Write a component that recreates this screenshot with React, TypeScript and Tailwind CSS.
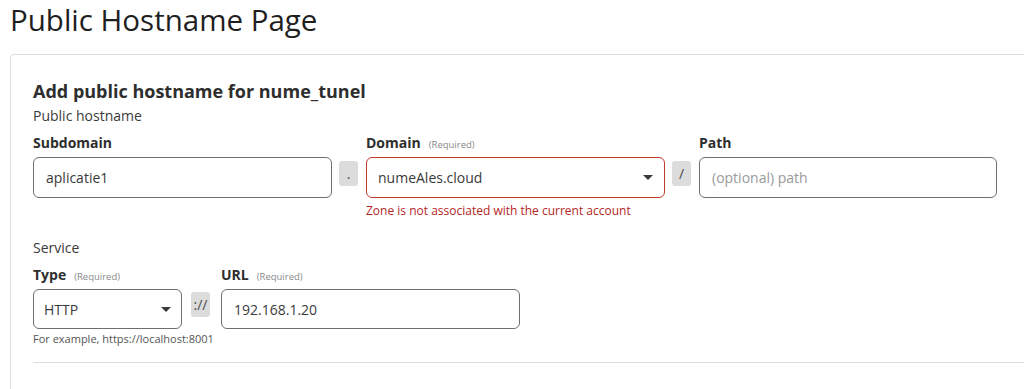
import React from "react";

function Caret() {
  return (
    <svg width="10" height="5" viewBox="0 0 10 5" className="block">
      <polygon points="0,0 10,0 5,5" fill="#3a3a3a" />
    </svg>
  );
}

function Sep({ children, className = "" }: { children: React.ReactNode; className?: string }) {
  return (
    <div
      className={`flex h-[25px] w-[19px] shrink-0 items-center justify-center rounded-[3px] bg-[#dcdcdc] text-[14px] leading-none text-[#4a4a4a] ${className}`}
    >
      {children}
    </div>
  );
}

function Label({ text, required }: { text: string; required?: boolean }) {
  return (
    <div className="h-[20px] text-[14px] leading-[20px]">
      <span className="font-bold text-[#2e2e2e]">{text}</span>
      {required && <span className="ml-[8px] text-[9.5px] leading-[0] text-[#8a8a8a]">(Required)</span>}
    </div>
  );
}

export default function App() {
  return (
    <div className="h-[389px] w-[1024px] overflow-hidden bg-white font-['Open_Sans',sans-serif] text-[#333]">
      <h1 className="pl-[10px] pt-[2px] text-[29.5px] font-normal leading-[36px] text-[#1f1f1f]">
        Public Hostname Page
      </h1>
      <div className="ml-[10px] mt-[16px] w-[1060px] rounded-[4px] border border-[#dedede] pl-[22px] pt-[24px] pb-[40px]">
        <h2 className="text-[18px] font-bold leading-[24px] text-[#2e2e2e]">
          Add public hostname for nume_tunel
        </h2>
        <div className="mt-[3px] text-[14px] leading-[20px] text-[#3a3a3a]">Public hostname</div>

        <div className="mt-[7px] flex items-start">
          <div className="w-[299px] shrink-0">
            <Label text="Subdomain" />
            <div className="mt-[4px] flex h-[41px] items-center rounded-[6px] border border-[#6f6f6f] pl-[12px] text-[14px] text-[#3a3a3a]">
              aplicatie1
            </div>
          </div>
          <Sep className="ml-[7px] mr-[8px] mt-[28px]">.</Sep>
          <div className="w-[299px] shrink-0">
            <Label text="Domain" required />
            <div className="mt-[4px] flex h-[41px] items-center justify-between rounded-[6px] border border-[#c0392b] pl-[11px] pr-[11px] text-[14px] text-[#3a3a3a]">
              <span>numeAles.cloud</span>
              <Caret />
            </div>
            <div className="mt-[5px] text-[12px] leading-[16px] text-[#b3261e]">
              Zone is not associated with the current account
            </div>
          </div>
          <Sep className="ml-[7px] mr-[8px] mt-[28px]">/</Sep>
          <div className="w-[298px] shrink-0">
            <Label text="Path" />
            <div className="mt-[4px] flex h-[41px] items-center rounded-[6px] border border-[#6f6f6f] pl-[12px] text-[14px] text-[#9a9a9a]">
              (optional) path
            </div>
          </div>
        </div>

        <div className="mt-[19px] text-[14px] leading-[20px] text-[#3a3a3a]">Service</div>
        <div className="mt-[7px] flex items-start">
          <div className="w-[149px] shrink-0">
            <Label text="Type" required />
            <div className="mt-[4px] flex h-[40px] items-center justify-between rounded-[6px] border border-[#6f6f6f] pl-[10px] pr-[10px] text-[14px] text-[#3a3a3a]">
              <span>HTTP</span>
              <Caret />
            </div>
            <div className="mt-[3px] whitespace-nowrap text-[11px] leading-[14px] text-[#555]">
              For example, https://localhost:8001
            </div>
          </div>
          <Sep className="ml-[9px] mr-[11px] mt-[27px]">://</Sep>
          <div className="w-[299px] shrink-0">
            <Label text="URL" required />
            <div className="mt-[4px] flex h-[40px] items-center rounded-[6px] border border-[#6f6f6f] pl-[12px] text-[14px] text-[#3a3a3a]">
              192.168.1.20
            </div>
          </div>
        </div>

        <div className="mt-[16px] h-px bg-[#dcdcdc]" />
      </div>
    </div>
  );
}
